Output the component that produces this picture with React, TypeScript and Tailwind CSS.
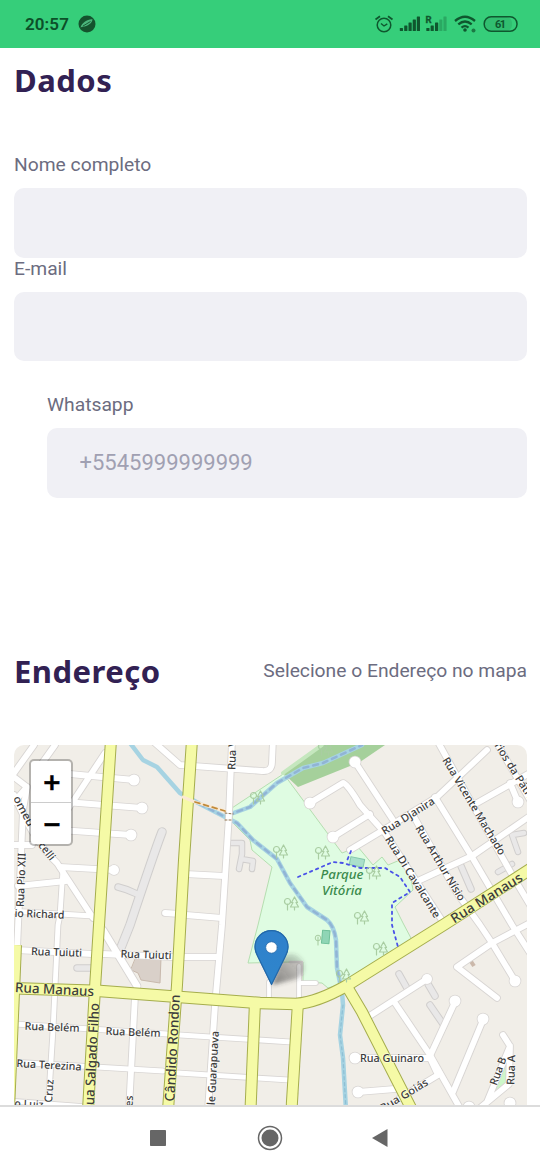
import React from "react";

type Road = { d: string; w?: number };

const whiteRoads: Road[] = [
  { d: "M14 773 L34 745" },
  { d: "M40 766 L55 745" },
  { d: "M10 774 L27 787 L14 802" },
  { d: "M27 787 L23 810 L17 950" },
  { d: "M10 845 H32" },
  { d: "M14 795 Q34 842 57 863 L93 918" },
  { d: "M103 930 L137 986", w: 7 },
  { d: "M70 774 L134 780" },
  { d: "M40 800 L142 808" },
  { d: "M60 830 L131 835" },
  { d: "M60 867 L114 870" },
  { d: "M105 753 L66 812" },
  { d: "M18 886 L66 881" },
  { d: "M63 869 L60 915 L58 925 L53 1030 L48 1110", w: 5 },
  { d: "M10 911 L93 916", w: 5 },
  { d: "M16 950 L92 954" },
  { d: "M102 954 L172 957" },
  { d: "M15 1024 L167 1034 M180 1035 L291 1042", w: 5 },
  { d: "M13 1062 L163 1071 M178 1073 L289 1080", w: 5 },
  { d: "M10 1101 L88 1107", w: 5 },
  { d: "M135 996 L129 1110", w: 6 },
  { d: "M155 743 L180 765 L262 771 Q272 772 272 762 L273 740" },
  { d: "M232 740 L229 815 L222 925 L215 1005 L213 1035 L208 1110" },
  { d: "M185 874 L224 876 M165 913 L180 914 M186 915 L222 918 M182 957 L218 957" },
  { d: "M355 762 L393 820 M310 803 L343 783 Q347 783 360 805 L385 833 L445 925" },
  { d: "M333 837 L370 814" },
  { d: "M350 850 L385 829 L437 797 L487 750" },
  { d: "M438 742 L470 800 L515 880 L530 905" },
  { d: "M435 797 L472 857 L512 925 L530 953" },
  { d: "M413 815 L457 893 L480 925 L492 943 L515 981" },
  { d: "M420 880 L472 856 L530 816" },
  { d: "M477 803 L530 773 M510 783 L518 802 M495 740 L530 800" },
  { d: "M530 923 L492 943 L457 967 L497 998" },
  { d: "M368 1017 L427 979 M395 1003 L430 1055 L461 1110" },
  { d: "M455 1002 L430 1056 M483 1020 L453 1092" },
  { d: "M355 1058 H430 L438 1075 L400 1098" },
  { d: "M358 1092 L395 1089" },
  { d: "M503 1035 L510 1046 L487 1102 M510 1046 L509 1084 L480 1108" },
  { d: "M299 966 L299 1002 M300 983 H316 M269 982 V1001", w: 4 },
];

const heads: [number, number, number][] = [
  [134, 780, 5.5], [142, 808, 5.5], [131, 835, 5.5], [114, 870, 5],
  [355, 762, 5.5], [310, 803, 5.5], [333, 837, 5.5], [518, 802, 5.5],
  [427, 979, 5], [455, 1001, 5.5], [483, 1019, 5.5], [515, 981, 5.5],
  [355, 1058, 5.5], [358, 1092, 5.5], [469, 1107, 5.5], [510, 1103, 5.5],
];

const serviceRoads: Road[] = [
  { d: "M162 832 Q155 850 130 925 L120 950", w: 8 },
  { d: "M118 887 Q127 889 137 894", w: 6 },
  { d: "M77 968 H91", w: 6 },
  { d: "M231 843 H242 V854 L239 869 M241 859 L253 861 L252 869", w: 5 },
  { d: "M461 866 L471 889", w: 6 },
  { d: "M524 833 L512 835 L518 852 M498 872 L512 864", w: 5 },
  { d: "M399 974 L408 990 M430 1005 L443 1024 M428 984 L435 996", w: 6 },
];

const yellowRoads: Road[] = [
  { d: "M16 945 L9 1110" },
  { d: "M111 740 L99 925 L95 988 L88 1110" },
  { d: "M192 740 L184 860 L177 985 L168 1110" },
  { d: "M255 1002 L250.5 1110" },
  { d: "M298 1002 L291.5 1110" },
  { d: "M346 985 L362 1012 L412 1110" },
  { d: "M10 988 L100 991 L180 997 L260 1003 L296 1004 Q318 1002 346 986 L445 924 L532 868", w: 10.5 },
];

const trees: [number, number][] = [
  [280, 852], [322, 853], [291, 904], [361, 918], [380, 949],
  [257, 798], [325, 749], [373, 873], [343, 976],
];

type Label = { t: string; x: number; y: number; r?: number; w: number; s?: number };

const labels: Label[] = [
  { t: "Rua Pio XII", x: 21, y: 880, r: -88, w: 54 },
  { t: "io Richard", x: 39.5, y: 914, r: 2, w: 50 },
  { t: "omeu", x: 24, y: 811, r: 62, w: 33 },
  { t: "celli", x: 47, y: 851, r: 52, w: 20 },
  { t: "Rua Tuiuti", x: 56.5, y: 952, r: 2, w: 51 },
  { t: "Rua Tuiuti", x: 146, y: 954.5, r: 2, w: 51 },
  { t: "Rua Manaus", x: 54.5, y: 989.5, r: 3, w: 79, s: 13.5 },
  { t: "Rua Belém", x: 52, y: 1027, r: 2, w: 55 },
  { t: "Rua Belém", x: 133, y: 1032, r: 2, w: 55 },
  { t: "Rua Terezina", x: 49, y: 1065, r: 3, w: 65 },
  { t: "o Luiz", x: 29, y: 1104, r: 3, w: 29 },
  { t: "Cruz", x: 49, y: 1091, r: -86, w: 23 },
  { t: "ua Salgado Filho", x: 92, y: 1054, r: -87, w: 102, s: 13.5 },
  { t: "Cândido Rondon", x: 172.5, y: 1048, r: -87, w: 107, s: 13.5 },
  { t: "es", x: 129, y: 1101, r: -87, w: 11 },
  { t: "le Guarapuava", x: 213, y: 1068, r: -87, w: 74 },
  { t: "Rua V", x: 232, y: 755, r: -88, w: 30 },
  { t: "Rua Djanira", x: 408, y: 816, r: -32, w: 60 },
  { t: "Rua Di Cavalcante", x: 413, y: 877, r: 58, w: 94 },
  { t: "Rua Arthur Nísio", x: 440.5, y: 863, r: 59, w: 86 },
  { t: "Rua Vicente Machado", x: 474, y: 806, r: 59, w: 112 },
  { t: "rios da Pátria", x: 516, y: 773, r: 58, w: 70 },
  { t: "Rua Manaus", x: 486.5, y: 898, r: -32, w: 82, s: 13.5 },
  { t: "Rua Guinaro", x: 392, y: 1058, w: 64 },
  { t: "Rua Goiás", x: 404, y: 1095, r: -31, w: 54 },
  { t: "Rua B", x: 498, y: 1071, r: -70, w: 29 },
  { t: "Rua A", x: 511, y: 1070, r: -88, w: 30 },
];

const parkArea =
  "M232 808 L327 745 H345 L283 773 L342 853 L358 847 L373 865 L382 857 L388 865 L400 860 L410 873 L413 890 L395 907 L403 923 L412 940 L345 983 L328 988 L322 983 L303 982 V962 H290 L248 963 L258 925 L272 867 L252 850 L250 840 L233 823Z";
const river =
  "M130 743 L143 760 L157 767 L180 793 L200 804 L227 818 L237 823 L253 840 L277 859 L290 883 L307 907 L327 920 Q334 926 336 940 L337 968 L342 992 L343 1005 L340 1035 L343 1058 L346 1110";
const stream = "M228 815 L250 807 L260 798 L277 783 L303 768 L323 763 L362 745";
const markerBody =
  "M12.5 0C5.6 0 0 5.6 0 12.5c0 2.5 .8 4.8 2 7L12.5 41 23 19.500c1.200-2.200 2-4.500 2-7C25 5.600 19.400 0 12.500 0z";

function StreetMap() {
  return (
    <svg
      className="block h-[360px] w-[513px]"
      viewBox="14 745 513 360"
      strokeLinecap="round"
      strokeLinejoin="round"
      fill="none"
    >
      <defs>
        <linearGradient id="pin" x1="0" y1="0" x2="0" y2="1">
          <stop offset="0" stopColor="#2f80cb" />
          <stop offset="1" stopColor="#2f86cc" />
        </linearGradient>
        <linearGradient id="shade" x1="0" y1="1" x2="1" y2="0">
          <stop offset="0" stopColor="#333" stopOpacity="0.6" />
          <stop offset="1" stopColor="#333" stopOpacity="0.12" />
        </linearGradient>
        <filter id="soft" x="-30%" y="-30%" width="160%" height="160%">
          <feGaussianBlur stdDeviation="2.200" />
        </filter>
      </defs>
      <rect x="14" y="745" width="513" height="360" fill="#f1eee8" />
      <path d={parkArea} fill="#dffce2" stroke="#b5deb0" strokeWidth="1" />
      <path d="M283 773 L322 745 H385 L360 762 L298 787Z" fill="#a5d09b" />
      <path d="M283 773 L322 745" stroke="#c5e7be" strokeWidth="4" />
      <path d="M137 955 L161 958 L160 983 L141 980 L138 973 L131 970Z" fill="#d9d0c9" stroke="#c8b9ad" />
      <path d="M504 1057 L491 1093 L508 1082Z" fill="#cdf7c9" />
      <path d="M470 960 L474 966" stroke="#cbb8aa" strokeWidth="4" strokeLinecap="butt" />
      <rect x="350" y="858" width="14" height="8" fill="#aae0cb" stroke="#86c9ad" transform="rotate(12 357 862)" />
      <rect x="322" y="930.5" width="7.500" height="13" fill="#8fd5b5" stroke="#6fc09a" transform="rotate(5 326 937)" />

      <path d={river} stroke="#a6d3e2" strokeWidth="4.500" />
      <path d={stream} stroke="#a6d3e2" strokeWidth="4.500" />
      <path
        d={`M200 804 L227 818 L237 823 L253 840 L277 859 L290 883 L307 907 L327 920 Q334 926 336 940 L337 968 L342 992 ${stream}`}
        stroke="#8fb0d4"
        strokeWidth="2.500"
        strokeDasharray="5 5"
        opacity="0.9"
      />
      <path d="M343 1005 L340 1035 L343 1058 L346 1110" stroke="#8ebfd4" strokeWidth="1.200" strokeDasharray="3 3" />

      {serviceRoads.map((r) => (
        <path key={r.d} d={r.d} stroke="#d0cecd" strokeWidth={(r.w ?? 5) + 1.5} />
      ))}
      {serviceRoads.map((r) => (
        <path key={r.d} d={r.d} stroke="#e9e8e8" strokeWidth={(r.w ?? 5) - 0.5} />
      ))}

      {whiteRoads.map((r) => (
        <path key={r.d} d={r.d} stroke="#d8d5d3" strokeWidth={(r.w ?? 6) + 1.6} />
      ))}
      {heads.map(([x, y, r]) => (
        <circle key={`${x}-${y}`} cx={x} cy={y} r={r + 0.8} fill="#d8d5d3" />
      ))}
      {whiteRoads.map((r) => (
        <path key={r.d} d={r.d} stroke="#fff" strokeWidth={(r.w ?? 6) - 0.2} />
      ))}
      {heads.map(([x, y, r]) => (
        <circle key={`${x}-${y}`} cx={x} cy={y} r={r} fill="#fff" />
      ))}
      <path d="M290 962 H302 V975" stroke="#d7d4d2" strokeWidth="2.500" />

      {yellowRoads.map((r) => (
        <path key={r.d} d={r.d} stroke="#a5ad4d" strokeWidth={(r.w ?? 10) + 2} strokeLinecap="butt" />
      ))}
      {yellowRoads.map((r) => (
        <path key={r.d} d={r.d} stroke="#f5faa6" strokeWidth={r.w ?? 10} strokeLinecap="butt" />
      ))}

      <path d="M183 797 L195 802 L225 811" stroke="#fbe9d2" strokeWidth="3" />
      <path d="M195 802 L225 811" stroke="#c08a3c" strokeWidth="1.800" strokeDasharray="5 4" />
      <path d="M225 813 L233 814 M225 820 L233 820" stroke="#92744f" strokeWidth="1" strokeDasharray="2 2" />
      <path
        d="M298 877 L333 862 L343 863 L360 868 L385 868 L400 877 L410 892 L392 903 L392 925 L398 947 M351 851 L346 863"
        stroke="#4a52e8"
        strokeWidth="1.800"
        strokeDasharray="2.500 4"
      />

      {trees.map(([x, y]) => (
        <g key={`${x}-${y}`} transform={`translate(${x} ${y})`} stroke="#a9cda2" strokeWidth="1.200">
          <circle cx="-3.500" cy="-2.500" r="3" />
          <path d="M-3.500 0 V6 M3.500 -7 L0.500 -1.500 H2 L-0.500 3 H7.500 L5 -1.500 H6.500Z M3.500 3 V6" />
        </g>
      ))}
      <path d="M318 937 V945" stroke="#a9cda2" strokeWidth="1.100" />
      <circle cx="318" cy="938" r="2.800" stroke="#a9cda2" />

      <g fontFamily='"Noto Sans", sans-serif' textAnchor="middle" paintOrder="stroke">
        {labels.map((l) => (
          <text
            key={`${l.t}-${l.x}`}
            transform={`translate(${l.x} ${l.y}) rotate(${l.r ?? 0})`}
            dy={l.s ? 4.6 : 3.8}
            fontSize={l.s ?? 10.8}
            fontWeight="500"
            textLength={l.w}
            lengthAdjust="spacingAndGlyphs"
            fill="#3c3c3c"
            stroke={l.s ? "#f5faa6" : "#ffffff"}
            strokeOpacity="0.55"
            strokeWidth="1.500"
          >
            {l.t}
          </text>
        ))}
        <g fontSize="13" fontStyle="italic" fontWeight="500" fill="#3a8a4c" stroke="#dffce2" strokeWidth="1.500">
          <text x="342" y="879" textLength="43" lengthAdjust="spacingAndGlyphs">Parque</text>
          <text x="342" y="895" textLength="40" lengthAdjust="spacingAndGlyphs">Vitória</text>
        </g>
      </g>

      <path d="M272 985 L280 960 Q292 948 302 960 Q308 972 296 979Z" fill="url(#shade)" filter="url(#soft)" />
      <g transform="translate(254.500 930) scale(1.360 1.345)">
        <path d={markerBody} fill="url(#pin)" />
        <path d={markerBody} fill="none" stroke="#2468a8" strokeWidth="0.900" transform="translate(0.4 0.4) scale(0.970 0.980)" />
        <circle cx="12.500" cy="13" r="4.300" fill="#fff" stroke="#2b6eae" strokeWidth="0.700" />
      </g>
    </svg>
  );
}

function StatusBar() {
  return (
    <header className="flex h-12 shrink-0 items-center justify-between bg-[#36ce7a] pr-[22px] pl-[25px] text-[#0c5029]">
      <div className="flex items-center gap-[9px]">
        <span className="text-[17px] leading-6 font-semibold tracking-[0.1px]">20:57</span>
        <svg className="size-[18px]" viewBox="0 0 18 18">
          <circle cx="9" cy="9" r="8.500" fill="#14532d" />
          <path d="M2.500 12.500 C4 8 9 4 14.500 4.300 C14.500 8 9 12 4.500 11.800Z" fill="#4bb57c" />
          <path d="M5 11 L12.500 6.500" stroke="#14532d" strokeWidth="0.900" fill="none" />
        </svg>
      </div>
      <svg className="h-6 w-[144px]" viewBox="374 12 144 24" fill="none" stroke="#0f572e">
        <circle cx="384" cy="25" r="6.800" strokeWidth="1.500" />
        <path d="M381 23.500 L384 26 L387.300 23.800" strokeWidth="1.400" />
        <path d="M375.500 19.500 L380 16.200 M388 16.200 L392.500 19.500" strokeWidth="1.800" />
        <g fill="#0f572e" stroke="none">
          <rect x="399.800" y="28" width="3.200" height="3" rx="0.500" />
          <rect x="404.200" y="25.500" width="3.200" height="5.500" rx="0.500" />
          <rect x="408.500" y="22.500" width="3.200" height="8.500" rx="0.500" />
          <rect x="412.700" y="19.500" width="3.200" height="11.500" rx="0.500" />
          <rect x="416.800" y="16.500" width="3.200" height="14.500" rx="0.500" />
          <rect x="426.300" y="28" width="3.200" height="3" rx="0.500" />
          <rect x="430.600" y="25.500" width="3.200" height="5.500" rx="0.500" />
          <rect x="435" y="22.500" width="3.200" height="8.500" rx="0.500" />
          <g opacity="0.300">
            <rect x="439.200" y="19.500" width="3.200" height="11.500" rx="0.500" />
            <rect x="443.400" y="16.500" width="3.200" height="14.500" rx="0.500" />
          </g>
          <circle cx="465" cy="30" r="1.800" />
          <circle cx="473.500" cy="30.500" r="2" opacity="0.700" />
          <rect x="485" y="17" width="27" height="14" rx="6" opacity="0.130" />
        </g>
        <path d="M455 21 Q465 12.500 475 21 M458.300 24.400 Q465 18.600 471.700 24.400 M461.500 27.600 Q465 24.600 468.500 27.600" strokeWidth="2.300" />
        <rect x="484.200" y="16.700" width="32.800" height="14.600" rx="7" strokeWidth="1.500" />
        <g fill="#0f572e" stroke="none" fontFamily="Roboto, sans-serif" fontWeight="700">
          <text x="425.500" y="23" fontSize="9.500" stroke="#0f572e" strokeWidth="0.300">R</text>
          <text x="500.500" y="28" fontSize="11" textAnchor="middle" textLength="11">61</text>
        </g>
      </svg>
    </header>
  );
}

function Heading({ children }: { children: React.ReactNode }) {
  return (
    <h2 className="font-['Noto_Sans',sans-serif] text-[31px] leading-[38px] font-bold tracking-[0.5px] text-[#322153]">
      {children}
    </h2>
  );
}

function Field({ label, placeholder }: { label: string; placeholder?: string }) {
  return (
    <label className="flex flex-col gap-3">
      <span className="h-[22px] text-[19.25px] leading-[22px] text-[#6c6c80]">{label}</span>
      <input
        className="h-[69.5px] w-full rounded-[10px] bg-[#f0f0f5] px-[32.5px] text-[22px] placeholder:text-[#a0a0b2]"
        placeholder={placeholder}
      />
    </label>
  );
}

export default function App() {
  return (
    <div className="flex h-[1170px] w-[540px] flex-col overflow-hidden bg-white font-[Roboto,sans-serif]">
      <StatusBar />
      <main className="flex min-h-0 flex-1 flex-col pr-[13px] pl-[14px]">
        <section className="pt-[12.5px]">
          <Heading>Dados</Heading>
          <div className="mt-[55.5px] flex flex-col">
            <Field label="Nome completo" />
            <Field label="E-mail" />
          </div>
          <div className="mt-[33px] ml-[33px]">
            <Field label="Whatsapp" placeholder="+5545999999999" />
          </div>
        </section>
        <section className="mt-[154.5px] flex min-h-0 flex-1 flex-col">
          <div className="flex items-center justify-between">
            <Heading>Endereço</Heading>
            <span className="text-[19.25px] leading-[38px] text-[#6c6c80]">Selecione o Endereço no mapa</span>
          </div>
          <div className="relative mt-[55px] min-h-0 flex-1 overflow-hidden rounded-t-[10px]">
            <StreetMap />
            <div className="absolute top-[14px] left-[15px] flex w-[44px] flex-col divide-y divide-[#ccc] rounded-[5px] border-2 border-black/25 bg-white bg-clip-padding text-center font-['DejaVu_Sans',sans-serif] text-[23px] font-bold text-black [-webkit-text-stroke:0.6px_black]">
              <button className="h-[42px] pl-[2px] leading-[38px]">+</button>
              <button className="h-[41px] pl-[2px] leading-[36px]">−</button>
            </div>
          </div>
        </section>
      </main>
      <nav className="flex h-[65px] shrink-0 items-center justify-between border-t-2 border-[#dcdcdc] pr-[152px] pb-[2px] pl-[150px] text-[#666]">
        <svg className="size-4" viewBox="0 0 16 16">
          <rect width="16" height="16" rx="0.800" fill="currentColor" />
        </svg>
        <svg className="ml-[2px] size-[26px]" viewBox="0 0 26 26">
          <circle cx="13" cy="13" r="11.500" fill="none" stroke="currentColor" strokeWidth="1.500" />
          <circle cx="13" cy="13" r="8.500" fill="currentColor" />
        </svg>
        <svg className="h-[18px] w-4" viewBox="0 0 16 18">
          <path d="M15.500 0 V18 L0 9Z" fill="currentColor" />
        </svg>
      </nav>
    </div>
  );
}
